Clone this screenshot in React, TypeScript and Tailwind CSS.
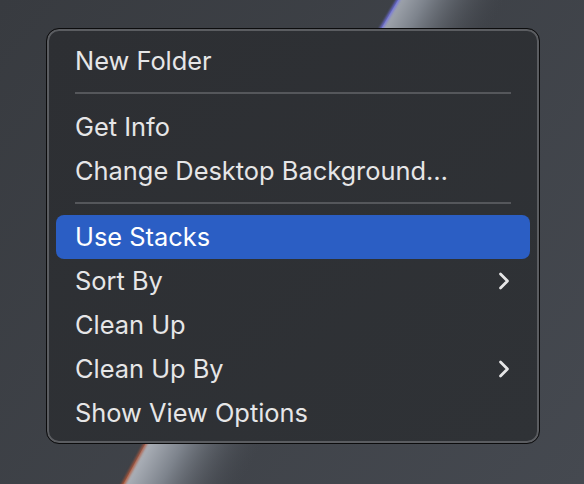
import React from 'react'

type Item = { label: string; sub?: boolean; active?: boolean } | 'sep'

const items: Item[] = [
  { label: 'New Folder' },
  'sep',
  { label: 'Get Info' },
  { label: 'Change Desktop Background…' },
  'sep',
  { label: 'Use Stacks', active: true },
  { label: 'Sort By', sub: true },
  { label: 'Clean Up' },
  { label: 'Clean Up By', sub: true },
  { label: 'Show View Options' },
]

function Chevron() {
  return (
    <svg width="12" height="18" viewBox="0 0 12 18" fill="none">
      <path d="M2.5 2 L9.5 9 L2.5 16" stroke="#e6e6e7" strokeWidth="2.8" strokeLinecap="round" strokeLinejoin="round" />
    </svg>
  )
}

function Wallpaper() {
  // sweeping lit edge of the desktop picture
  const edge = 'M404 -10 Q 250 250 118 494'
  return (
    <svg className="absolute inset-0" width="584" height="484" viewBox="0 0 584 484">
      <defs>
        <linearGradient id="base" x1="0" y1="0" x2="584" y2="484" gradientUnits="userSpaceOnUse">
          <stop offset="0" stopColor="#383b40" />
          <stop offset="1" stopColor="#454950" />
        </linearGradient>
        <linearGradient id="glow" x1="258" y1="244" x2="346" y2="292" gradientUnits="userSpaceOnUse">
          <stop offset="0" stopColor="#a9aeb6" />
          <stop offset="0.3" stopColor="#7d838c" />
          <stop offset="1" stopColor="#454950" stopOpacity="0" />
        </linearGradient>
        <linearGradient id="rim" x1="0" y1="0" x2="0" y2="484" gradientUnits="userSpaceOnUse">
          <stop offset="0" stopColor="#6d6ee6" />
          <stop offset="0.5" stopColor="#8a7fb0" />
          <stop offset="1" stopColor="#b8542f" />
        </linearGradient>
        <filter id="soft" x="-10%" y="-10%" width="120%" height="120%">
          <feGaussianBlur stdDeviation="0.8" />
        </filter>
      </defs>
      <rect width="584" height="484" fill="url(#base)" />
      <path d={`${edge} L 700 494 L 700 -10 Z`} fill="url(#glow)" />
      <path d={edge} stroke="url(#rim)" strokeWidth="3.5" fill="none" opacity="0.8" filter="url(#soft)" />
    </svg>
  )
}

export default function App() {
  return (
    <div className="relative w-[584px] h-[484px] overflow-hidden" style={{ fontFamily: 'Inter, "Noto Sans", sans-serif' }}>
      <Wallpaper />
      <div className="relative flex pt-[28px] pl-[46px]">
        <div className="w-[494px] rounded-[13px] border border-[#0c0c0d] bg-gradient-to-br from-[#2d2f33] to-[#2f3236] shadow-[inset_0_0_0_2px_#5b5d61] pt-[10px] pb-[8px]">
          {items.map((it, i) =>
            it === 'sep' ? (
              <div key={i} className="h-[22px] pt-[9px] px-[28px]">
                <div className="h-[2px] bg-[#55575b]" />
              </div>
            ) : (
              <div
                key={i}
                className={`mx-[9px] h-[44px] rounded-[8px] pl-[19px] pr-[20px] flex items-center justify-between text-[25.4px] leading-none text-[#e6e6e7] ${
                  it.active ? 'bg-[#2b5ec4] text-white' : ''
                }`}
              >
                <span>{it.label}</span>
                {it.sub && <Chevron />}
              </div>
            )
          )}
        </div>
      </div>
    </div>
  )
}
